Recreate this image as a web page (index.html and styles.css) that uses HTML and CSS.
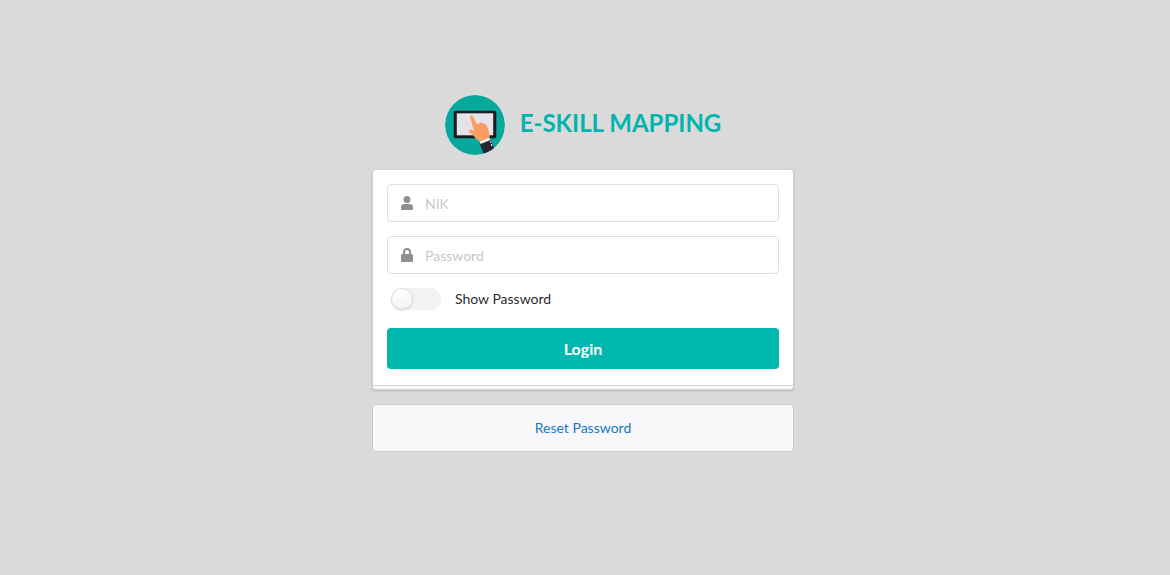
FILE: index.html
```html
<!DOCTYPE html>
<html lang="en">
<head>
<meta charset="utf-8">
<meta name="viewport" content="width=device-width, initial-scale=1">
<title>E-Skill Mapping</title>
<link rel="stylesheet" href="styles.css">
</head>
<body>
<main class="login">
  <h1 class="brand">
    <svg class="brand-logo" viewBox="0 0 60 60" aria-hidden="true">
      <defs><clipPath id="disc"><circle cx="30" cy="30" r="30"/></clipPath></defs>
      <g clip-path="url(#disc)">
        <circle cx="30" cy="30" r="30" fill="#09a89d"/>
        <rect x="8.700" y="15.700" width="42.600" height="27.600" rx="2" fill="#191c20"/>
        <rect x="11.800" y="18.300" width="36.400" height="22" fill="#e4e3e9"/>
        <path d="M34.500 48 45.800 44.500 49.500 54.500 38.500 58.800Z" fill="#252831"/>
        <path d="M34.500 46 44 42.500 45.500 45 35.500 49Z" fill="#f7f7f7"/>
        <path d="M25 22C24.800 20.200 27 19.600 28 21.300L32 29.200C34.500 27.400 37.500 27 40 29C42.800 31 43.400 34.500 44 37.500L44.800 42.500 35 46.500C32 45 30 43 28.500 40.500L24.300 37.200C23 35.600 24.300 34.200 26.300 34.800L29 36Z" fill="#fc9d63"/>
        <path d="M33.500 30.800 35 33.300M37 29.800 38.500 32.300M40.300 30.300 41.500 33.300" fill="none" stroke="#f18b50" stroke-width=".7"/>
        <path d="M45.800 46V48M46.600 49V51" stroke="#fff" stroke-width="1"/>
      </g>
    </svg>
    <span class="brand-name">E-SKILL MAPPING</span>
  </h1>

  <form class="card">
    <div class="field">
      <svg class="field-icon" viewBox="0 0 14 14" aria-hidden="true"><circle cx="7" cy="3.500" r="3.500"/><path d="M1 14V11.200C1 9.200 2.300 8 4.200 8H9.800C11.700 8 13 9.200 13 11.200V13Q13 14 12 14H2Q1 14 1 13Z"/></svg>
      <input class="field-input" type="text" placeholder="NIK" aria-label="NIK">
    </div>
    <div class="field">
      <svg class="field-icon" viewBox="0 0 14 14" aria-hidden="true"><path d="M2.300 6H3V4.100A4 4 0 0 1 11 4.100V6H11.700Q13 6 13 7.300V12.700Q13 14 11.700 14H2.300Q1 14 1 12.700V7.300Q1 6 2.300 6ZM5 6H9V4.100A2 2 0 0 0 5 4.100Z"/></svg>
      <input class="field-input" type="password" placeholder="Password" aria-label="Password">
    </div>
    <label class="toggle">
      <input class="toggle-switch" type="checkbox">
      <span>Show Password</span>
    </label>
    <button class="submit" type="submit">Login</button>
  </form>

  <div class="message"><a class="message-link" href="#reset">Reset Password</a></div>
</main>
</body>
</html>
```
FILE: styles.css
```css
* { box-sizing: border-box; }

body {
  margin: 0;
  min-height: 100vh;
  display: flex;
  align-items: center;
  justify-content: center;
  padding: 0 4px 28px 0;
  background: #dadada;
  color: rgba(0, 0, 0, .87);
  font: 14px/20px Lato, "Liberation Sans", sans-serif;
}

.login {
  display: flex;
  flex-direction: column;
  gap: 14px;
  width: 100%;
  max-width: 422px;
}

.brand {
  display: flex;
  align-items: center;
  justify-content: center;
  gap: 15px;
  margin: 0;
  color: #00b5ad;
  font-size: 24px;
  line-height: 30px;
  font-weight: 700;
}

.brand-logo { width: 60px; height: 60px; }
.brand-name { padding-bottom: 4px; }

.card {
  position: relative;
  display: flex;
  flex-direction: column;
  gap: 14px;
  padding: 14px 14px 20px;
  overflow: hidden;
  background: #fff;
  border: 1px solid #d0d0d0;
  border-radius: 4px;
  box-shadow: 0 1px 2px rgba(34, 36, 38, .2);
}

.card::after {
  content: "";
  position: absolute;
  right: 0;
  bottom: 0;
  left: 0;
  height: 3px;
  background: #f7f7f7;
  border-top: 1px solid #d4d4d5;
}

.field {
  display: flex;
  align-items: center;
  height: 38px;
  border: 1px solid #dededf;
  border-radius: 4px;
}

.field:focus-within { border-color: #85b7d9; }

.field-icon {
  flex: none;
  width: 14px;
  height: 14px;
  margin: 0 11px 0 12px;
  fill: #909090;
}

.field-input {
  flex: 1;
  min-width: 0;
  height: 100%;
  padding: 0 14px 0 0;
  border: 0;
  outline: 0;
  background: transparent;
  color: inherit;
  font: inherit;
}

.field-input::placeholder { color: #c7c7c7; opacity: 1; }

.toggle {
  display: flex;
  align-items: center;
  gap: 14px;
  height: 22px;
  padding-left: 4px;
  cursor: pointer;
}

.toggle-switch {
  appearance: none;
  display: flex;
  width: 50px;
  height: 22px;
  margin: 0;
  border-radius: 11px;
  background: #f2f2f2;
  cursor: pointer;
}

.toggle-switch::before {
  content: "";
  width: 22px;
  height: 22px;
  border-radius: 50%;
  background: linear-gradient(#fff, #f3f3f3);
  box-shadow: 0 1px 2px rgba(34, 36, 38, .1), inset 0 0 0 1px rgba(34, 36, 38, .12);
}

.toggle-switch:checked { justify-content: flex-end; background: #00b5ad; }

.submit {
  height: 41px;
  margin-top: 4px;
  padding: 0;
  border: 0;
  border-radius: 4px;
  background: #00b8b0;
  color: #fff;
  font: 700 16px/16px Lato, "Liberation Sans", sans-serif;
  cursor: pointer;
}

.message {
  padding: 13px 20px;
  background: #f8f8fa;
  border: 1px solid #c8c9ca;
  border-radius: 4px;
  text-align: center;
}

.message-link { color: #1678c2; text-decoration: none; }
```
